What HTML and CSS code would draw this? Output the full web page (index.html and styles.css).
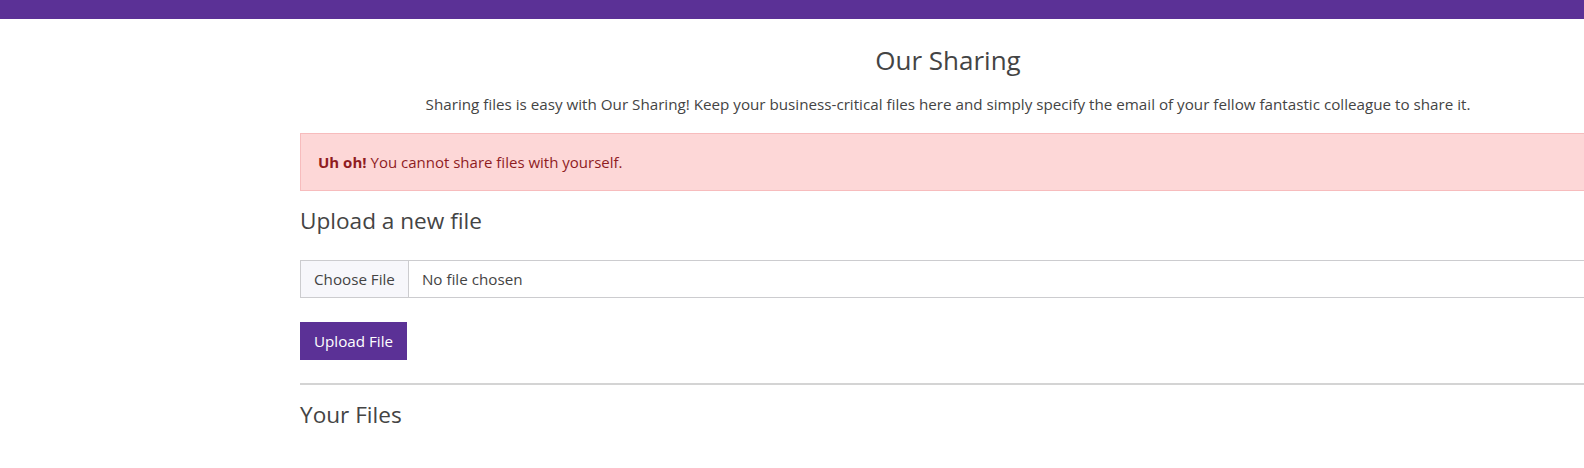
FILE: index.html
```html
<!DOCTYPE html>
<html lang="en">
<head>
<meta charset="utf-8">
<title>Our Sharing</title>
<link rel="stylesheet" href="styles.css">
</head>
<body>
<div class="topbar"></div>
<div class="page">
  <main class="main">
    <h1 class="title">Our Sharing</h1>
    <p class="lead">Sharing files is easy with Our Sharing! Keep your business-critical files here and simply specify the email of your fellow fantastic colleague to share it.</p>
    <div class="alert"><strong>Uh oh!</strong> You cannot share files with yourself.</div>
    <h2 class="section-title">Upload a new file</h2>
    <form class="upload-form">
      <input class="file-input" type="file" name="file">
      <button class="btn" type="button">Upload File</button>
    </form>
    <hr class="divider">
    <h2 class="section-title files-title">Your Files</h2>
  </main>
</div>
</body>
</html>
```

FILE: styles.css
```css
html, body {
  margin: 0;
  padding: 0;
  overflow: hidden;
  background: #fff;
}
body {
  font-family: "Open Sans", "Noto Sans", sans-serif;
  color: #444;
  font-size: 15px;
}
.topbar {
  height: 19px;
  background: #5b3196;
}
.page {
  padding-left: 300px;
}
.main {
  width: 1296px;
}
.title {
  margin: 0;
  padding-top: 23px;
  text-align: center;
  font-size: 26px;
  font-weight: 400;
  line-height: 36px;
}
.lead {
  margin: 14px 0 0;
  text-align: center;
  font-size: 15.2px;
  line-height: 24px;
}
.alert {
  margin-top: 17px;
  height: 56px;
  display: flex;
  align-items: center;
  padding: 0 17px;
  background: #fdd7d7;
  border: 1px solid #f7bcbd;
  color: #8f1c1f;
  font-size: 15px;
}
.alert strong {
  font-weight: 700;
  margin-right: 4px;
}
.section-title {
  margin: 14px 0 0;
  font-size: 22.6px;
  font-weight: 400;
  line-height: 32px;
}
.upload-form {
  display: flex;
  flex-direction: column;
  align-items: flex-start;
  gap: 24px;
  margin-top: 23px;
}
.file-input {
  width: 100%;
  height: 38px;
  box-sizing: border-box;
  border: 1px solid #cccccf;
  font-family: inherit;
  font-size: 15.2px;
  color: #444;
  padding: 0;
  background: #fff;
}
.file-input::file-selector-button {
  height: 36px;
  margin: 0 13px 0 0;
  padding: 0 13px;
  border: none;
  border-right: 1px solid #cccccf;
  background: #f7f7fb;
  font-family: inherit;
  font-size: 15.2px;
  color: #444;
}
.btn {
  height: 38px;
  padding: 0 14px;
  border: none;
  background: #5b3196;
  color: #fff;
  font-family: inherit;
  font-size: 15.2px;
}
.divider {
  margin: 23px 0 0;
  border: none;
  border-top: 2px solid #d4d4d4;
}
.files-title {
  margin-top: 14px;
}
```
